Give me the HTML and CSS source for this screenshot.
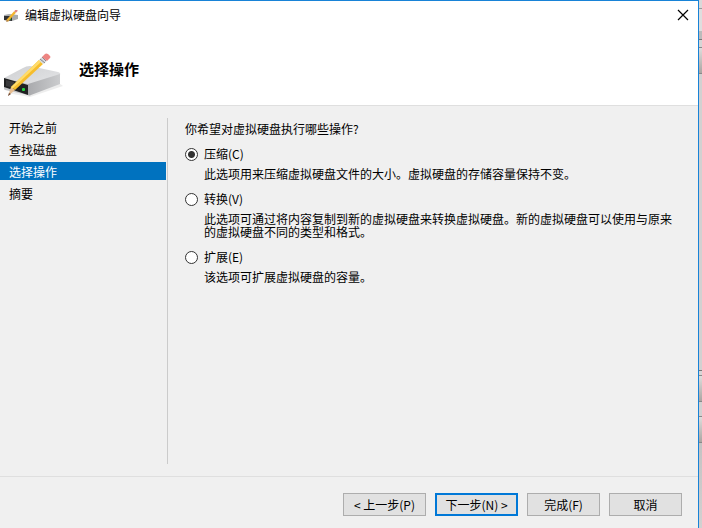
FILE: index.html
```html
<!DOCTYPE html>
<html lang="zh-CN">
<head>
    <meta charset="UTF-8">
    <meta name="viewport" content="width=device-width, initial-scale=1">
    <title>编辑虚拟硬盘向导</title>
    <link rel="stylesheet" href="styles.css">
</head>
<body>
    <main class="wizard">
        <header class="wizard-header">
            <div class="titlebar">
                <svg class="titlebar-icon" viewBox="0 0 15 12" aria-hidden="true">
                    <path d="M0 5L5 4L14 5V9L8 11L0 10Z" fill="#a9abad"/>
                    <path d="M0 6H8V11L0 10Z" fill="#303234"/>
                    <path d="M5 9H7" stroke="#18b834" stroke-width="1.3"/>
                    <path d="M3 11L11 2" stroke="#f3b52d" stroke-width="2.4"/>
                    <path d="M2 12L3 10L5 11Z" fill="#a77a50"/>
                    <path d="M11 2L13 0" stroke="#df8580" stroke-width="2.4"/>
                </svg>
                <span class="titlebar-text">编辑虚拟硬盘向导</span>
                <button type="button" class="close" aria-label="关闭">
                    <svg viewBox="0 0 12 12" aria-hidden="true"><path d="M1 1L11 11M11 1L1 11" stroke="#000" stroke-width="1.2"/></svg>
                </button>
            </div>
            <div class="banner">
                <svg class="banner-icon" viewBox="0 0 60 48" aria-hidden="true">
                    <defs>
                        <linearGradient id="diskTop" x1="0" y1="0" x2="1" y2="1">
                            <stop offset="0" stop-color="#cfd0d2"/>
                            <stop offset="1" stop-color="#e4e5e7"/>
                        </linearGradient>
                        <linearGradient id="diskSide" x1="0" y1="0" x2="1" y2="0">
                            <stop offset="0" stop-color="#a9aaad"/>
                            <stop offset="1" stop-color="#cbccce"/>
                        </linearGradient>
                    </defs>
                    <path d="M3 41L26 45L59 34L52 29Z" fill="#ededed"/>
                    <path d="M0 26L19 16Q22 14 26 14L54 20Q57 21 56 23L25 33Z" fill="url(#diskTop)"/>
                    <path d="M24 32L56 22V32L27 43Q25 44 24 43Z" fill="url(#diskSide)"/>
                    <path d="M0 26L24 32V43L1 38Q0 38 0 36Z" fill="#c3c4c6"/>
                    <path d="M0 26L24 33V43L0 35Z" fill="#202122"/>
                    <path d="M2 28L10 30V36L2 34Z" fill="#39393b"/>
                    <rect x="18" y="36" width="3" height="3" rx="1" fill="#1fd53c"/>
                    <path d="M4 44L7 35L11 38Z" fill="#e6bd91"/>
                    <path d="M4 44L5 41L7 42Z" fill="#6b4937"/>
                    <path d="M7 35L35 8L39 12L11 38Z" fill="#f6bd2c"/>
                    <path d="M7 35L35 8L37 10L8 37Z" fill="#ffdc6c"/>
                    <path d="M35 8L38 5L43 9L39 12Z" fill="#d7d9dc"/>
                    <path d="M36 7L41 11M38 5L42 9" stroke="#85888d"/>
                    <path d="M38 5L41 2Q42 1 44 2L46 4Q47 5 46 6L43 9Z" fill="#ed8582"/>
                </svg>
                <h1>选择操作</h1>
            </div>
        </header>

        <div class="wizard-body">
            <nav class="steps" aria-label="向导步骤">
                <a href="#">开始之前</a>
                <a href="#">查找磁盘</a>
                <a href="#" class="active" aria-current="step">选择操作</a>
                <a href="#">摘要</a>
            </nav>

            <form class="options" id="actionForm">
                <p class="question">你希望对虚拟硬盘执行哪些操作?</p>
                <div class="option">
                    <input type="radio" name="action" id="compact" checked>
                    <label for="compact">压缩(C)</label>
                    <p>此选项用来压缩虚拟硬盘文件的大小。虚拟硬盘的存储容量保持不变。</p>
                </div>
                <div class="option">
                    <input type="radio" name="action" id="convert">
                    <label for="convert">转换(V)</label>
                    <p>此选项可通过将内容复制到新的虚拟硬盘来转换虚拟硬盘。新的虚拟硬盘可以使用与原来的虚拟硬盘不同的类型和格式。</p>
                </div>
                <div class="option">
                    <input type="radio" name="action" id="expand">
                    <label for="expand">扩展(E)</label>
                    <p>该选项可扩展虚拟硬盘的容量。</p>
                </div>
            </form>
        </div>

        <footer class="wizard-footer">
            <button type="button" class="btn btn-wide">&lt; 上一步(P)</button>
            <button type="submit" form="actionForm" class="btn btn-wide btn-default">下一步(N) &gt;</button>
            <button type="button" class="btn">完成(F)</button>
            <button type="button" class="btn">取消</button>
        </footer>
    </main>

    <!-- Edge of the window behind the wizard -->
    <div class="behind">
        <div class="behind-top"></div>
        <div class="behind-line"></div>
        <div class="behind-box"></div>
        <div class="behind-fill"></div>
        <div class="behind-line behind-line-short"></div>
        <div class="behind-box"></div>
        <div class="behind-gap"></div>
        <div class="behind-box"></div>
        <div class="behind-bottom"></div>
    </div>
</body>
</html>
```

FILE: styles.css
```css
* {
    box-sizing: border-box;
}
body {
    display: flex;
    min-height: 100vh;
    margin: 0;
    font-family: "Noto Sans CJK SC", sans-serif;
    font-size: 12px;
    line-height: 18px;
    color: #000;
    background-color: #d2d1d1;
}
h1, p {
    margin: 0;
}
.wizard {
    display: flex;
    flex: 1;
    flex-direction: column;
    min-width: 0;
    background-color: #f0f0f0;
    border-top: 1px solid #1883d7;
    border-right: 1px solid #1883d7;
}

/* Title bar and banner */
.wizard-header {
    background-color: #fff;
    border-bottom: 1px solid #dfdfdf;
}
.titlebar {
    display: flex;
    align-items: center;
    height: 28px;
    padding: 0 8px 0 4px;
}
.titlebar-icon {
    width: 15px;
    height: 12px;
    margin-top: 2px;
}
.titlebar-text {
    flex: 1;
    margin-left: 6px;
}
.close {
    display: flex;
    padding: 1px;
    border: none;
    background: none;
}
.close svg {
    width: 12px;
    height: 12px;
}
.banner {
    display: flex;
    align-items: center;
    height: 76px;
    padding: 4px 4px 0;
}
.banner-icon {
    width: 60px;
    height: 48px;
    margin-top: 14px;
}
.banner h1 {
    margin-left: 15px;
    font-size: 15px;
    font-weight: bold;
    line-height: 20px;
}

/* Steps on the left, options on the right */
.wizard-body {
    display: flex;
    flex: 1;
    padding: 12px 0;
}
.steps {
    display: flex;
    flex-direction: column;
    gap: 4px;
    width: 168px;
    padding-right: 1px;
    border-right: 1px solid #cbcbcb;
}
.steps a {
    padding: 1px 0 0 9px;
    line-height: 17px;
    color: #000;
    text-decoration: none;
}
.steps a.active {
    color: #fff;
    background-color: #0072bf;
}
.options {
    flex: 1;
    padding: 2px 18px 0 17px;
}
.question {
    margin-bottom: 7px;
}
.option {
    display: grid;
    grid-template-columns: 13px 1fr;
    column-gap: 6px;
    align-items: center;
    margin-bottom: 10px;
}
.option input {
    appearance: none;
    width: 13px;
    height: 13px;
    margin: 0;
    border: 1px solid #333;
    border-radius: 50%;
    background-color: #fff;
}
.option input:checked {
    background-image: radial-gradient(circle, #333 3px, #fff 4px);
}
.option p {
    grid-column: 2;
    margin-top: 4px;
    line-height: 13px;
}

/* Buttons */
.wizard-footer {
    display: flex;
    justify-content: flex-end;
    gap: 9px;
    padding: 16px 16px 12px;
    border-top: 1px solid #dfdfdf;
}
.btn {
    width: 73px;
    height: 23px;
    padding: 0;
    font: inherit;
    line-height: 18px;
    color: #000;
    background-color: #e1e1e1;
    border: 1px solid #adadad;
}
.btn-wide {
    width: 83px;
}
.btn-default {
    border: 2px solid #0078d7;
}

/* Strip of the window behind */
.behind {
    display: flex;
    flex-direction: column;
    width: 3px;
}
.behind-top {
    height: 39px;
    background: linear-gradient(#d9d9d9 8px, #999 8px, #999 9px, #dedede 9px, #dedede 31px, #bbb 31px);
}
.behind-line {
    height: 8px;
    border-top: 1px solid #777;
    background-color: #d6d6d6;
}
.behind-line-short {
    height: 5px;
}
.behind-box {
    height: 27px;
    border-top: 1px solid #888;
    border-bottom: 1px solid #888;
    background: linear-gradient(#dedddc, #aaa6a2);
}
.behind-fill {
    flex: 1;
}
.behind-gap {
    height: 14px;
}
.behind-bottom {
    height: 85px;
    background: linear-gradient(#c4c3c3, #d2d1d1);
}
```
